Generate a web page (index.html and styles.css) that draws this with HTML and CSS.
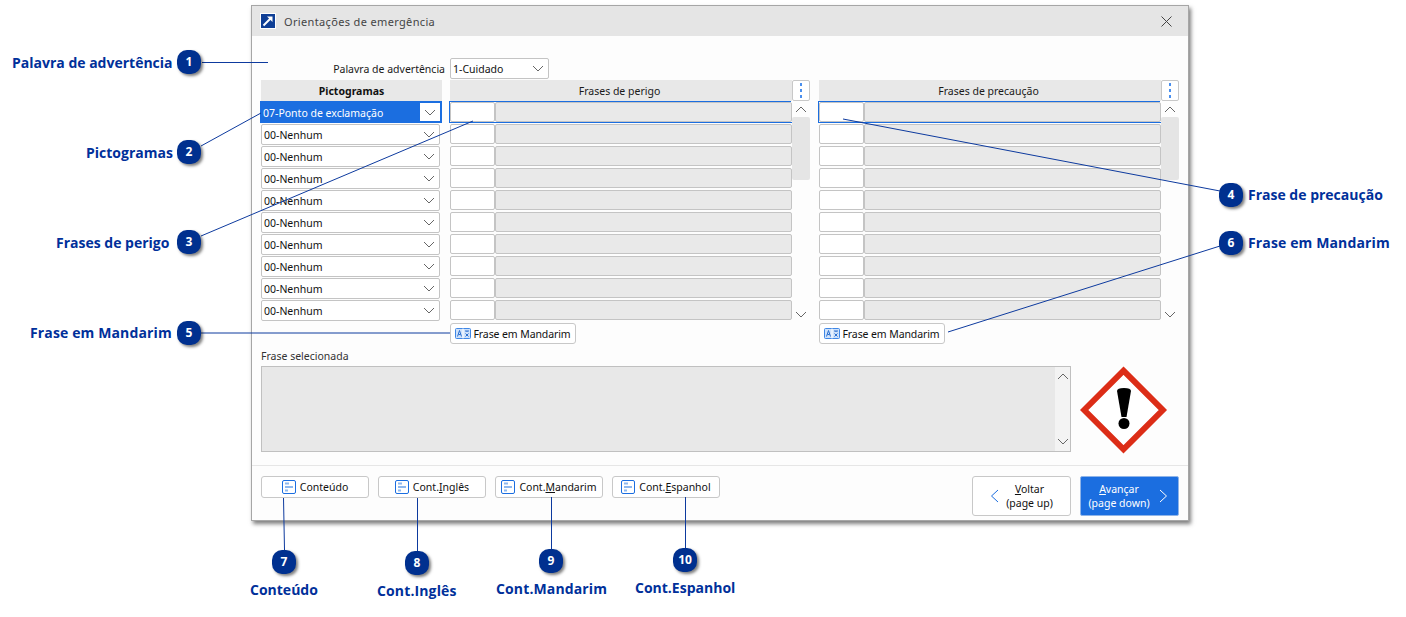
FILE: index.html
```html
<!DOCTYPE html>
<html lang="pt">
<head>
<meta charset="utf-8">
<title>Orientações de emergência</title>
<link rel="stylesheet" href="styles.css">
</head>
<body>
<svg class="sprite" width="0" height="0" aria-hidden="true">
  <symbol id="chev-down" viewBox="0 0 12 7"><path d="M1 1l5 5 5-5" fill="none" stroke="currentColor"/></symbol>
  <symbol id="chev-up" viewBox="0 0 12 7"><path d="M1 6l5-5 5 5" fill="none" stroke="currentColor"/></symbol>
  <symbol id="doc" viewBox="0 0 14 14"><rect x=".5" y=".5" width="13" height="13" rx="1.5" fill="#fff" stroke="#1b6ee0"/><path d="M3 3.500h4M3 7h8M3 10.500h3" stroke="#8db8ef" stroke-width="2" fill="none"/></symbol>
  <symbol id="trans" viewBox="0 0 16 11"><rect x=".5" y=".5" width="15" height="10" rx="1" fill="#cfe2fa" stroke="#3f87e6"/><path d="M8 .5v10" stroke="#fff"/><path d="M2.500 8.500L4.500 2.500 6.500 8.500M3.500 6.500h2" fill="none" stroke="#2a6fd0"/><path d="M10 3h4M12 3v1M10.500 8.500l3-3M10.500 5.500l3 3" fill="none" stroke="#2a6fd0"/></symbol>
</svg>

<div class="dialog">
  <header class="titlebar">
    <svg class="title-icon" viewBox="0 0 16 16" width="16" height="16"><rect width="16" height="16" fill="#fff"/><rect x="1" y="1" width="14" height="14" fill="#0f3f96"/><path d="M3.500 12.500L10.500 5.500" stroke="#fff" stroke-width="2"/><path d="M7 3.500h5.500V9z" fill="#fff"/></svg>
    <span class="title-text">Orientações de emergência</span>
    <svg class="close" viewBox="0 0 11 11" width="11" height="11"><path d="M.5.500l10 10M10.500.500l-10 10" stroke="#444" fill="none"/></svg>
  </header>

  <main class="body">
    <div class="word-row">
      <label class="word-label">Palavra de advertência</label>
      <div class="select word-select"><span>1-Cuidado</span><svg class="chev"><use href="#chev-down"/></svg></div>
    </div>

    <div class="columns">
      <section class="col-pict">
        <div class="col-head strong">Pictogramas</div>
        <div class="pict-list">
          <div class="select selected"><span>07-Ponto de exclamação</span><svg class="chev"><use href="#chev-down"/></svg></div>
          <div class="select"><span>00-Nenhum</span><svg class="chev"><use href="#chev-down"/></svg></div>
          <div class="select"><span>00-Nenhum</span><svg class="chev"><use href="#chev-down"/></svg></div>
          <div class="select"><span>00-Nenhum</span><svg class="chev"><use href="#chev-down"/></svg></div>
          <div class="select"><span>00-Nenhum</span><svg class="chev"><use href="#chev-down"/></svg></div>
          <div class="select"><span>00-Nenhum</span><svg class="chev"><use href="#chev-down"/></svg></div>
          <div class="select"><span>00-Nenhum</span><svg class="chev"><use href="#chev-down"/></svg></div>
          <div class="select"><span>00-Nenhum</span><svg class="chev"><use href="#chev-down"/></svg></div>
          <div class="select"><span>00-Nenhum</span><svg class="chev"><use href="#chev-down"/></svg></div>
          <div class="select"><span>00-Nenhum</span><svg class="chev"><use href="#chev-down"/></svg></div>
        </div>
      </section>

      <section class="col-phrases">
        <div class="phrase-head"><div class="col-head">Frases de perigo</div><button class="kebab"><i></i><i></i><i></i></button></div>
        <div class="phrase-body">
          <div class="phrase-list">
            <div class="phrase selected"><div class="code"></div><div class="desc"></div></div>
            <div class="phrase"><div class="code"></div><div class="desc"></div></div>
            <div class="phrase"><div class="code"></div><div class="desc"></div></div>
            <div class="phrase"><div class="code"></div><div class="desc"></div></div>
            <div class="phrase"><div class="code"></div><div class="desc"></div></div>
            <div class="phrase"><div class="code"></div><div class="desc"></div></div>
            <div class="phrase"><div class="code"></div><div class="desc"></div></div>
            <div class="phrase"><div class="code"></div><div class="desc"></div></div>
            <div class="phrase"><div class="code"></div><div class="desc"></div></div>
            <div class="phrase"><div class="code"></div><div class="desc"></div></div>
          </div>
          <div class="vscroll"><svg class="chev"><use href="#chev-up"/></svg><div class="thumb"></div><svg class="chev end"><use href="#chev-down"/></svg></div>
        </div>
        <button class="btn btn-trans"><svg class="ic-trans"><use href="#trans"/></svg>Frase em Mandarim</button>
      </section>

      <section class="col-phrases">
        <div class="phrase-head"><div class="col-head">Frases de precaução</div><button class="kebab"><i></i><i></i><i></i></button></div>
        <div class="phrase-body">
          <div class="phrase-list">
            <div class="phrase selected"><div class="code"></div><div class="desc"></div></div>
            <div class="phrase"><div class="code"></div><div class="desc"></div></div>
            <div class="phrase"><div class="code"></div><div class="desc"></div></div>
            <div class="phrase"><div class="code"></div><div class="desc"></div></div>
            <div class="phrase"><div class="code"></div><div class="desc"></div></div>
            <div class="phrase"><div class="code"></div><div class="desc"></div></div>
            <div class="phrase"><div class="code"></div><div class="desc"></div></div>
            <div class="phrase"><div class="code"></div><div class="desc"></div></div>
            <div class="phrase"><div class="code"></div><div class="desc"></div></div>
            <div class="phrase"><div class="code"></div><div class="desc"></div></div>
          </div>
          <div class="vscroll"><svg class="chev"><use href="#chev-up"/></svg><div class="thumb"></div><svg class="chev end"><use href="#chev-down"/></svg></div>
        </div>
        <button class="btn btn-trans"><svg class="ic-trans"><use href="#trans"/></svg>Frase em Mandarim</button>
      </section>
    </div>

    <div class="selected-label">Frase selecionada</div>
    <div class="selected-row">
      <div class="textarea">
        <div class="ta-scroll"><svg class="chev"><use href="#chev-up"/></svg><svg class="chev"><use href="#chev-down"/></svg></div>
      </div>
      <svg class="ghs" viewBox="0 0 88 88" width="88" height="88">
        <path d="M43.500 4.700L82.800 44 43.500 83.300 4.200 44z" fill="#fff" stroke="#dc2d17" stroke-width="6"/>
        <path d="M37 25q0-3 7-3t7 3L46.500 51h-5z" fill="#000"/>
        <circle cx="44" cy="57.500" r="5.500" fill="#000"/>
      </svg>
    </div>
  </main>

  <footer class="footer">
    <div class="footer-left">
      <button class="btn btn-cont"><svg class="ic-doc"><use href="#doc"/></svg>Conteúdo</button>
      <button class="btn btn-cont"><svg class="ic-doc"><use href="#doc"/></svg>Cont.<u>I</u>nglês</button>
      <button class="btn btn-cont"><svg class="ic-doc"><use href="#doc"/></svg>Cont.<u>M</u>andarim</button>
      <button class="btn btn-cont"><svg class="ic-doc"><use href="#doc"/></svg>Cont.<u>E</u>spanhol</button>
    </div>
    <div class="footer-right">
      <button class="btn nav"><svg class="nav-ic back" viewBox="0 0 9 14" width="9" height="14"><path d="M8 1L1.500 7 8 13" fill="none" stroke="#1b6ee0"/></svg><span><u>V</u>oltar<br>(page up)</span></button>
      <button class="btn nav primary"><span><u>A</u>vançar<br>(page down)</span><svg class="nav-ic" viewBox="0 0 9 14" width="9" height="14"><path d="M1 1l6.500 6L1 13" fill="none" stroke="#fff"/></svg></button>
    </div>
  </footer>
</div>

<svg class="leaders" width="1406" height="617" viewBox="0 0 1406 617" aria-hidden="true">
  <path d="M202 62.500H268M201 146L261 113M201 236L473 121M1220 191L843 119M201 333H450M1220 246L948 332M283.500 498L284.500 550M417.500 498V551M551.500 497V549M685.500 497V548"/>
</svg>

<div class="badge b1">1</div><div class="note n1">Palavra de advertência</div>
<div class="badge b2">2</div><div class="note n2">Pictogramas</div>
<div class="badge b3">3</div><div class="note n3">Frases de perigo</div>
<div class="badge b4">4</div><div class="note n4">Frase de precaução</div>
<div class="badge b5">5</div><div class="note n5">Frase em Mandarim</div>
<div class="badge b6">6</div><div class="note n6">Frase em Mandarim</div>
<div class="badge b7">7</div><div class="note n7">Conteúdo</div>
<div class="badge b8">8</div><div class="note n8">Cont.Inglês</div>
<div class="badge b9">9</div><div class="note n9">Cont.Mandarim</div>
<div class="badge b10">10</div><div class="note n10">Cont.Espanhol</div>
</body>
</html>
```
FILE: styles.css
```css
* { box-sizing: border-box; }
html, body { margin: 0; padding: 0; }
body {
  width: 1406px;
  height: 617px;
  position: relative;
  overflow: hidden;
  background: #fff;
  font-family: "Noto Sans", "Open Sans", sans-serif;
  font-size: 10.500px;
  color: #1a1a1a;
  padding: 5px 0 0 251px;
}
.sprite { position: absolute; }

/* dialog */
.dialog {
  width: 938px;
  height: 516px;
  background: #fdfdfd;
  border: 1px solid #a6a6a6;
  box-shadow: 2px 3px 4px rgba(0,0,0,.5);
  display: flex;
  flex-direction: column;
}
.titlebar {
  height: 30px;
  flex: none;
  background: #e5e5e5;
  display: flex;
  align-items: center;
  padding: 0 16px 0 8px;
}
.title-text { margin-left: 8px; font-size: 11px; letter-spacing: .35px; color: #444; flex: 1; }
.body { flex: 1; padding: 0 9px; min-height: 0; }

.word-row { display: flex; align-items: center; margin-top: 22px; height: 21px; }
.word-label { width: 184px; text-align: right; margin-right: 5px; }
.select {
  height: 21px;
  background: #fff;
  border: 1px solid #c4c4c4;
  border-radius: 2px;
  display: flex;
  align-items: center;
  justify-content: space-between;
  padding: 0 4px 0 2px;
  color: #111;
}
.word-select { width: 99px; }
.chev { width: 12px; height: 7px; color: #666; flex: none; }

.columns { display: flex; margin-top: 1px; }
.col-pict { width: 181px; margin-right: 8px; flex: none; }
.col-phrases { width: 360px; flex: none; margin-right: 9px; }
.col-phrases:last-child { margin-right: 0; }
.col-head {
  height: 21px;
  background: #e8e8e8;
  text-align: center;
  line-height: 23px;
}
.strong { font-weight: 700; color: #111; }

.pict-list { display: flex; flex-direction: column; gap: 1px; width: 179px; padding-top: 1px; }
.pict-list .select { flex: none; }
.pict-list .select.selected {
  width: 182px;
  height: 22px;
  margin: -1px 0 0 -1px;
  border: 2px solid #1b6ee0;
  border-radius: 0;
  padding: 1px 0 0 0;
  background: linear-gradient(to right, #1b6ee0 158px, #fff 158px);
  color: #fff;
}
.selected span { padding-left: 1px; }
.selected .chev { margin-right: 4px; }

.phrase-head { display: flex; }
.phrase-head .col-head { width: 342px; padding-right: 3px; }
.kebab {
  width: 18px;
  height: 21px;
  padding: 0;
  background: #fff;
  border: 1px solid #c8c8c8;
  border-radius: 2px;
  display: flex;
  flex-direction: column;
  align-items: center;
  justify-content: center;
  gap: 3px;
}
.kebab i { width: 2px; height: 3px; background: #4a8fee; display: block; }

.phrase-body { display: flex; }
.phrase-list { width: 342px; display: flex; flex-direction: column; padding-top: 1px; }
.phrase { display: flex; height: 20px; margin-bottom: 2px; flex: none; }
.phrase.selected { box-shadow: -1px -1px 0 #1b6ee0, 0 1px 0 #1b6ee0, -1px 1px 0 #1b6ee0; }
.code { width: 45px; background: #fff; border: 1px solid #c4c4c4; border-radius: 2px; }
.desc { flex: 1; background: #e9e9e9; border: 1px solid #c4c4c4; border-radius: 2px; }
.vscroll { width: 18px; display: flex; flex-direction: column; align-items: center; height: 220px; padding-top: 5px; }
.thumb { width: 18px; height: 63px; margin-top: 4px; background: #e5e5e5; border-radius: 2px; }
.vscroll .end { margin-top: auto; margin-bottom: 3px; }

.btn {
  font: inherit;
  color: #111;
  background: #fff;
  border: 1px solid #c8c8c8;
  border-radius: 3px;
  display: flex;
  align-items: center;
  justify-content: center;
  padding: 0;
}
.btn-trans { width: 126px; height: 21px; margin-top: 1px; letter-spacing: -.1px; }
.ic-trans { width: 16px; height: 11px; margin-right: 2px; }
.ic-doc { width: 14px; height: 14px; margin-right: 4px; }

.selected-label { margin-top: 4px; height: 17px; line-height: 17px; color: #333; }
.selected-row { display: flex; align-items: flex-start; margin-top: 1px; }
.textarea {
  width: 810px;
  height: 86px;
  background: #e8e8e8;
  border: 1px solid #c0c0c0;
  display: flex;
  justify-content: flex-end;
}
.ta-scroll {
  width: 15px;
  background: #f3f3f3;
  display: flex;
  flex-direction: column;
  align-items: center;
  justify-content: space-between;
  padding: 6px 0;
}
.ghs { margin-left: 9px; flex: none; }

.footer {
  height: 55px;
  flex: none;
  border-top: 1px solid #e6e6e6;
  display: flex;
  justify-content: space-between;
  padding: 10px 9px 0;
}
.footer-left { display: flex; gap: 9px; }
.btn-cont { width: 108px; height: 22px; }
.footer-right { display: flex; gap: 9px; }
.nav { width: 99px; height: 40px; line-height: 14px; text-align: center; gap: 7px; }
.nav span { display: block; }
.primary { background: #1b6ee0; color: #fff; border-color: #8fb4e8; border-radius: 2px; gap: 9px; padding-right: 3px; }

/* annotations */
.leaders { position: absolute; left: 0; top: 0; pointer-events: none; }
.leaders path { fill: none; stroke: #0d3a9e; stroke-width: 1; }
.badge {
  position: absolute;
  width: 24px;
  height: 24px;
  border-radius: 10px;
  background: #00308f;
  color: #fff;
  font-family: "Open Sans", sans-serif;
  font-weight: 700;
  font-size: 12px;
  line-height: 24px;
  text-align: center;
  box-shadow: 2px 2px 3px rgba(0,0,0,.5);
}
.note {
  position: absolute;
  font-family: "Open Sans", sans-serif;
  font-weight: 700;
  font-size: 14px;
  line-height: 18px;
  color: #00309a;
  white-space: nowrap;
}
.n5, .n6, .n8, .n9 { letter-spacing: .13px; }
.b1 { left: 177px; top: 50px; }
.b2 { left: 177px; top: 140px; }
.b3 { left: 177px; top: 230px; }
.b5 { left: 177px; top: 321px; }
.b4 { left: 1219px; top: 183px; }
.b6 { left: 1219px; top: 231px; }
.b7 { left: 272px; top: 550px; }
.b8 { left: 405px; top: 551px; }
.b9 { left: 539px; top: 549px; }
.b10 { left: 673px; top: 548px; }
.n1 { left: 12px; top: 54px; }
.n2 { left: 86px; top: 144px; }
.n3 { left: 56px; top: 234px; }
.n5 { left: 30px; top: 324px; }
.n4 { left: 1248px; top: 186px; }
.n6 { left: 1248px; top: 234px; }
.n7 { left: 250px; top: 581px; }
.n8 { left: 377px; top: 582px; }
.n9 { left: 496px; top: 580px; }
.n10 { left: 635px; top: 579px; }
```
